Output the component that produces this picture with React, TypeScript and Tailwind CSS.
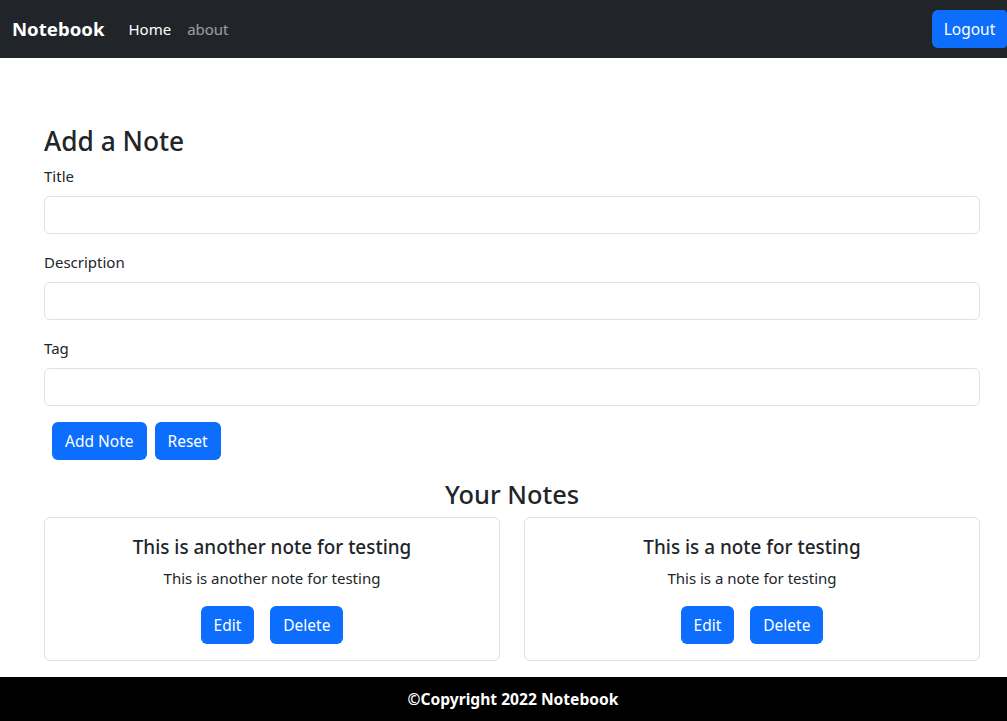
import React, { useState } from "react";

type Note = { title: string; description: string };

const notes: Note[] = [
  { title: "This is another note for testing", description: "This is another note for testing" },
  { title: "This is a note for testing", description: "This is a note for testing" },
];

const font = { fontFamily: '"Noto Sans", "Open Sans", sans-serif' };

const Navbar = () => (
  <nav className="flex h-[58px] items-center justify-between bg-[#212529] pl-3">
    <div className="flex items-center">
      <a className="text-[18.6px] font-bold text-white">Notebook</a>
      <div className="ml-6 flex items-center gap-4 text-[15px]">
        <a className="text-white">Home</a>
        <a className="text-white/55">about</a>
      </div>
    </div>
    <button className="h-[38px] w-[75px] rounded-l-md rounded-r-sm bg-[#0d6efd] pt-[2px] text-[15.5px] text-white">Logout</button>
  </nav>
);

const Field = ({ label, value, onChange }: { label: string; value: string; onChange: (v: string) => void }) => (
  <div className="mb-4">
    <label className="mb-2 block text-[15px] leading-6">{label}</label>
    <input
      value={value}
      onChange={(e) => onChange(e.target.value)}
      className="block h-[38px] w-full rounded-md border border-[#dee2e6] px-3 outline-none"
    />
  </div>
);

const NoteCard = ({ note }: { note: Note }) => (
  <div className="rounded-md border border-[#dee2e6] px-4 pb-4 pt-[17px] text-center">
    <h5 className="text-[18.9px] font-medium leading-6">{note.title}</h5>
    <p className="mt-[7px] text-[15px] leading-6">{note.description}</p>
    <div className="mt-4 flex justify-center gap-4">
      <button className="h-[38px] rounded-md bg-[#0d6efd] px-[13px] pt-[2px] text-[15.5px] text-white">Edit</button>
      <button className="h-[38px] rounded-md bg-[#0d6efd] px-[13px] pt-[2px] text-[15.5px] text-white">Delete</button>
    </div>
  </div>
);

export default function App() {
  const [title, setTitle] = useState("");
  const [description, setDescription] = useState("");
  const [tag, setTag] = useState("");

  return (
    <div className="flex min-h-[721px] flex-col bg-white text-[#212529]" style={font}>
      <Navbar />

      <main className="flex-1 pl-[44px] pr-[27px] pt-[66px]">
        {/* Add note form */}
        <h2 className="mb-[6px] text-[26.3px] font-medium leading-[34px]">Add a Note</h2>
        <Field label="Title" value={title} onChange={setTitle} />
        <Field label="Description" value={description} onChange={setDescription} />
        <Field label="Tag" value={tag} onChange={setTag} />
        <div className="ml-2 flex gap-2">
          <button className="h-[38px] rounded-md bg-[#0d6efd] px-[13px] pt-[2px] text-[15.5px] text-white">Add Note</button>
          <button className="h-[38px] rounded-md bg-[#0d6efd] px-[13px] pt-[2px] text-[15.5px] text-white">Reset</button>
        </div>

        {/* Notes list */}
        <h2 className="mb-[6px] mt-[17px] text-center text-[25.4px] font-medium leading-[34px]">Your Notes</h2>
        <div className="mb-4 grid grid-cols-2 gap-6">
          {notes.map((n) => (
            <NoteCard key={n.title} note={n} />
          ))}
        </div>
      </main>

      <footer className="flex h-[44px] items-center justify-center bg-black pl-[19px] pt-[2px] text-[15.6px] font-bold text-white">
        ©Copyright 2022 Notebook
      </footer>
    </div>
  );
}
